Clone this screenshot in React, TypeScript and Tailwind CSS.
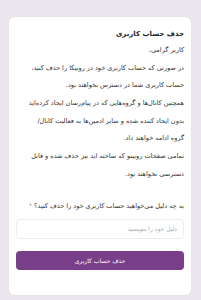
export default function App() {
  const lines = [
    'در صورتی که حساب کاربری خود در روبیکا را حذف کنید،',
    'حساب کاربری شما در دسترس نخواهند بود.',
    'همچنین کانال‌ها و گروه‌هایی که در پیام‌رسان ایجاد کرده‌اید',
    'بدون ایجاد کننده شده و سایر ادمین‌ها به فعالیت کانال/',
    'گروه ادامه خواهند داد.',
    'تمامی صفحات روبینو که ساخته اید نیز حذف شده و قابل',
    'دسترسی نخواهند بود.',
  ];
  return (
    <div
      dir="rtl"
      className="w-[201px] h-[300px] bg-[#ebe5ee] pt-[17px] pl-[9px] pr-[10px] overflow-hidden"
      style={{ fontFamily: '"DejaVu Sans", "Noto Sans", sans-serif' }}
    >
      <div className="bg-white rounded-[6px] h-[278px] px-[7px] pt-[11px] text-[#333] shadow-[0_0_2px_rgba(0,0,0,0.05)]">
        <div className="text-[7px] font-bold leading-[12px] text-[#222]">حذف حساب کاربری</div>
        <div className="text-[6.5px] leading-[12px] mt-[4px]">کاربر گرامی،</div>
        {lines.map((l) => (
          <div key={l} className="text-[6.5px] leading-[12px] mt-[5.7px] whitespace-nowrap">
            {l}
          </div>
        ))}
        <div className="text-[6.5px] leading-[12px] mt-[20px] whitespace-nowrap">
          به چه دلیل می‌خواهید حساب کاربری خود را حذف کنید؟ <span className="text-[#999]">*</span>
        </div>
        <div className="mt-[7px] h-[20px] border border-[#ececec] rounded-[4px] flex items-center px-[6px] text-[6px] text-[#aaa]">
          دلیل خود را بنویسید
        </div>
        <button className="mt-[12px] w-full h-[19px] rounded-[4px] bg-[#7a3f8b] text-white text-[6px] flex items-center justify-center">
          حذف حساب کاربری
        </button>
      </div>
    </div>
  );
}
